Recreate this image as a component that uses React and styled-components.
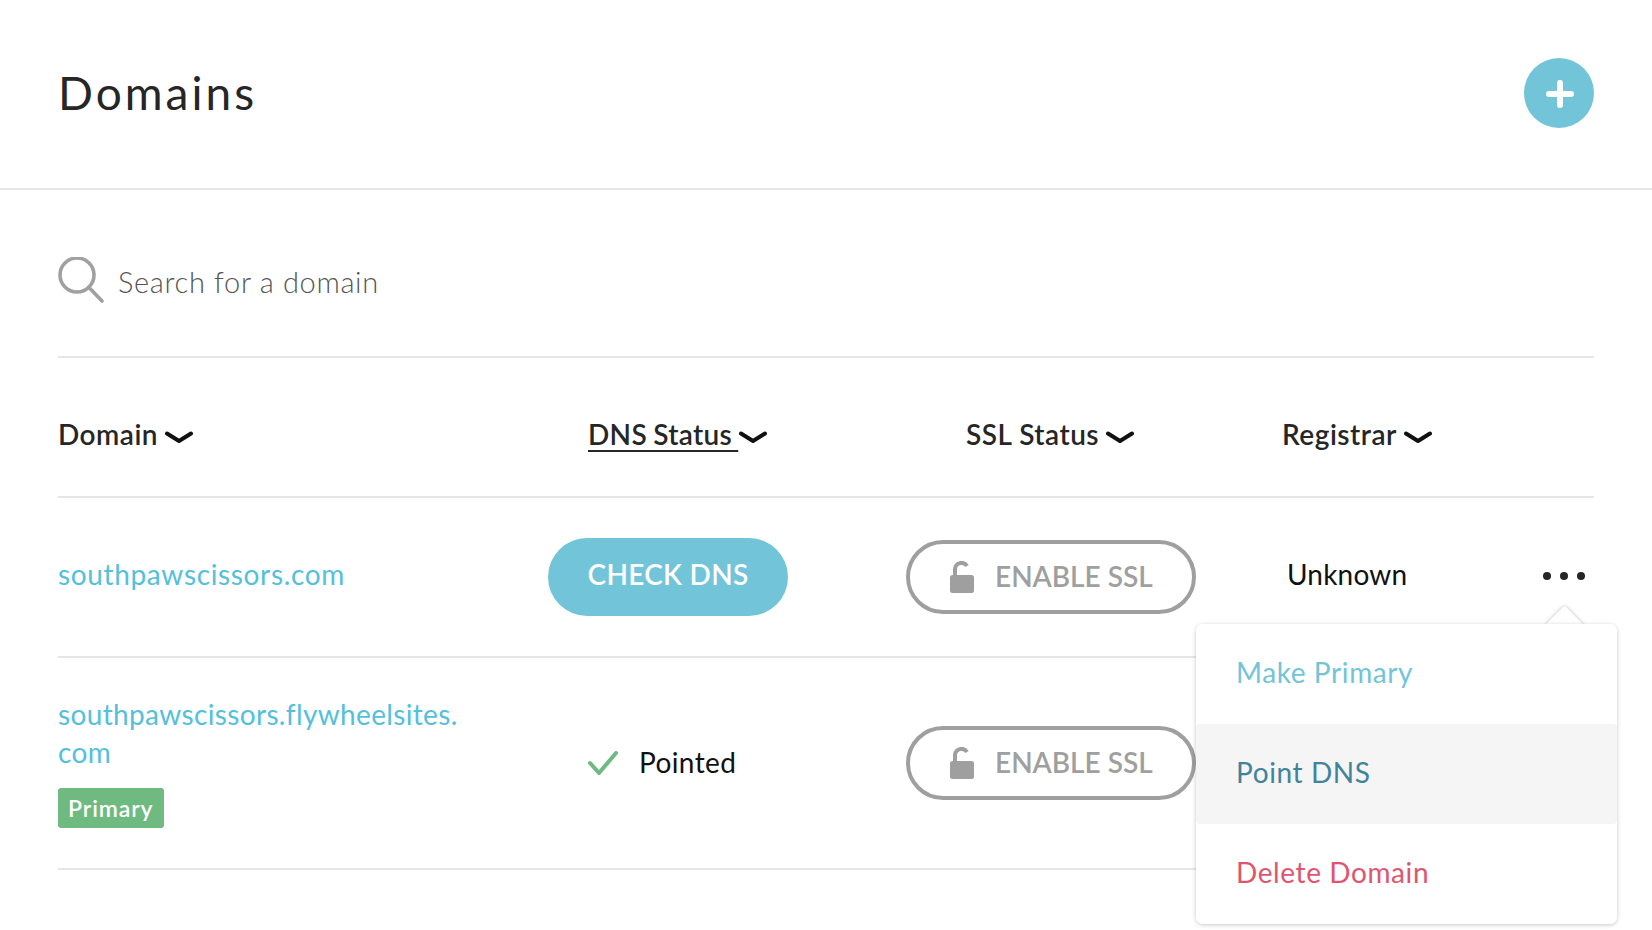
import styled, { createGlobalStyle } from 'styled-components';

const GlobalStyle = createGlobalStyle`
  html, body {
    margin: 0;
    padding: 0;
    background: #fff;
    font-family: Lato, "Open Sans", sans-serif;
    color: #111;
  }
  * { box-sizing: border-box; }
`
const Page = styled.div`
  width: 1652px;
  height: 930px;
  overflow: hidden;
`
const TitleBar = styled.header`
  height: 190px;
  padding: 58px 58px 0;
  display: flex;
  justify-content: space-between;
  align-items: flex-start;
  border-bottom: 2px solid #e6e6e6;
`
const Title = styled.h1`
  margin: 0;
  height: 70px;
  line-height: 70px;
  font-size: 46px;
  font-weight: 400;
  letter-spacing: 3px;
  color: #262626;
`
const AddButton = styled.button`
  width: 70px;
  height: 70px;
  padding: 2px 0 0 2px;
  border: 0;
  border-radius: 50%;
  background: #72c4d9;
  display: flex;
  align-items: center;
  justify-content: center;
`
const Content = styled.main`
  padding: 0 58px;
`
const SearchRow = styled.div`
  height: 168px;
  padding: 67px 0 53px;
  display: flex;
  align-items: center;
  gap: 14px;
  border-bottom: 2px solid #e6e6e6;
`
const SearchHint = styled.div`
  padding-top: 2px;
  font-size: 29px;
  font-weight: 300;
  letter-spacing: 0.66px;
  color: #555;
`
const Row = styled.div`
  display: grid;
  grid-template-columns: 490px 358px 290px 1fr;
  align-items: center;
  height: ${(p) => p.$height}px;
  padding-top: ${(p) => p.$top || 0}px;
  border-bottom: 2px solid #e6e6e6;
`
const HeadCell = styled.div`
  padding-left: ${(p) => p.$indent || 0}px;
  display: flex;
  align-items: center;
  font-size: 28px;
  font-weight: 600;
  letter-spacing: 0.5px;
  color: #262626;

  u {
    letter-spacing: 0.3px;
    word-spacing: -1px;
    text-underline-offset: 5px;
    text-decoration-thickness: 2px;
    white-space: pre;
  }
  svg { margin-left: ${(p) => p.$gap || 7}px; margin-top: 6px; }
`
const DomainCell = styled.div`
  padding-bottom: ${(p) => p.$lift}px;
`
const DomainLink = styled.a`
  display: block;
  font-size: 28px;
  line-height: 38px;
  letter-spacing: ${(p) => p.$tracking}px;
  color: #55bfdc;
  max-width: 420px;
`
const Badge = styled.span`
  display: inline-block;
  margin-top: 17px;
  width: 106px;
  height: 40px;
  line-height: 40px;
  padding-left: 10px;
  border-radius: 3px;
  background: #6fba81;
  color: #fff;
  font-size: 23px;
  font-weight: 600;
  letter-spacing: 0.9px;
`
const CheckButton = styled.button`
  width: 240px;
  height: 78px;
  padding: 0 0 7px;
  border: 0;
  border-radius: 39px;
  background: #72c4d9;
  color: #fff;
  font: 600 28px Lato, sans-serif;
  letter-spacing: 0.3px;
`
const SslButton = styled.button`
  width: 290px;
  height: 74px;
  padding: 0 0 0 40px;
  border: 4px solid #a09fa0;
  border-radius: 37px;
  background: #fff;
  color: #a09fa0;
  font: 600 28px Lato, sans-serif;
  display: flex;
  align-items: center;
  gap: 21px;

  span { padding-bottom: 2px; }
`
const Pointed = styled.div`
  padding: 0 0 2px 40px;
  display: flex;
  align-items: center;
  gap: 21px;
  font-size: 28px;
  letter-spacing: 0.4px;

  svg { margin-top: 2px; }
`
const RegistrarCell = styled.div`
  padding-left: 91px;
  display: flex;
  align-items: center;
  justify-content: space-between;
  font-size: 28px;
  letter-spacing: 0.2px;
  line-height: 38px;
`
const RegistrarName = styled.span`
  padding-bottom: 7px;
`
const Actions = styled.div`
  position: relative;
  top: -1px;
  margin-right: 9px;
  display: flex;
  gap: 9px;
`
const Dot = styled.span`
  width: 8px;
  height: 8px;
  border-radius: 50%;
  background: #262626;
`
const Menu = styled.div`
  position: absolute;
  top: 52px;
  right: -32px;
  width: 421px;
`
const MenuArrow = styled.div`
  position: absolute;
  top: -13px;
  right: 39px;
  width: 27px;
  height: 27px;
  background: #fff;
  border-radius: 3px;
  transform: rotate(45deg);
  box-shadow: 0 0 4px rgba(0, 0, 0, 0.28);
`
const MenuList = styled.div`
  position: relative;
  background: #fff;
  border-radius: 7px;
  box-shadow: 0 1px 4px rgba(0, 0, 0, 0.22);
  overflow: hidden;
`
const MenuItem = styled.div`
  height: 100px;
  padding: 0 0 4px 40px;
  display: flex;
  align-items: center;
  font-size: 28px;
  letter-spacing: 0.6px;
  border-radius: 4px;
  color: ${(p) => p.$color};
  background: ${(p) => (p.$active ? '#f5f5f5' : '#fff')};
`

const Chevron = () => (
  <svg width="28" height="13" viewBox="0 0 28 13">
    <path d="M2 2.5 L14 10 L26 2.5" fill="none" stroke="#111" strokeWidth="4" strokeLinecap="round" strokeLinejoin="round" />
  </svg>
)

const SearchIcon = () => (
  <svg width="46" height="46" viewBox="0 0 46 46">
    <circle cx="19" cy="18" r="17" fill="none" stroke="#a0a0a0" strokeWidth="3.6" />
    <path d="M31 30.5 L44 44" fill="none" stroke="#a0a0a0" strokeWidth="3.6" strokeLinecap="round" />
  </svg>
)

const PlusIcon = () => (
  <svg width="28" height="28" viewBox="0 0 28 28">
    <path d="M14 3 V25 M3 14 H25" fill="none" stroke="#fff" strokeWidth="6" strokeLinecap="round" />
  </svg>
)

const LockIcon = () => (
  <svg width="24" height="32" viewBox="0 0 24 32">
    <rect x="0" y="14" width="24" height="18" rx="2.5" fill="#a09fa0" />
    <path d="M5 15 V8 a6.5 6.5 0 0 1 12 -3" fill="none" stroke="#a09fa0" strokeWidth="4" />
  </svg>
)

const CheckIcon = () => (
  <svg width="30" height="24" viewBox="0 0 30 24">
    <path d="M2 12 L11 22 L28 2" fill="none" stroke="#6fba81" strokeWidth="4" strokeLinecap="round" strokeLinejoin="round" />
  </svg>
)

const EnableSsl = () => (
  <SslButton>
    <LockIcon />
    <span>ENABLE SSL</span>
  </SslButton>
)

const App = () => {
  return (
    <Page>
      <GlobalStyle />
      <TitleBar>
        <Title>Domains</Title>
        <AddButton aria-label="Add domain"><PlusIcon /></AddButton>
      </TitleBar>
      <Content>
        <SearchRow>
          <SearchIcon />
          <SearchHint>Search for a domain</SearchHint>
        </SearchRow>
        <Row $height={140} $top={14}>
          <HeadCell>Domain<Chevron /></HeadCell>
          <HeadCell $indent={40} $gap={1}><u>DNS Status </u><Chevron /></HeadCell>
          <HeadCell $indent={60}>SSL Status<Chevron /></HeadCell>
          <HeadCell $indent={86}>Registrar<Chevron /></HeadCell>
        </Row>
        <Row $height={160}>
          <DomainCell $lift={7}>
            <DomainLink $tracking={0.65}>southpawscissors.com</DomainLink>
          </DomainCell>
          <CheckButton>CHECK DNS</CheckButton>
          <EnableSsl />
          <RegistrarCell>
            <RegistrarName>Unknown</RegistrarName>
            <Actions>
              <Dot /><Dot /><Dot />
              <Menu>
                <MenuArrow />
                <MenuList>
                  <MenuItem $color="#72c4d9">Make Primary</MenuItem>
                  <MenuItem $color="#41839a" $active>Point DNS</MenuItem>
                  <MenuItem $color="#e0556e">Delete Domain</MenuItem>
                </MenuList>
              </Menu>
            </Actions>
          </RegistrarCell>
        </Row>
        <Row $height={212}>
          <DomainCell $lift={3}>
            <DomainLink $tracking={0.35}>southpawscissors.flywheelsites.<wbr />com</DomainLink>
            <Badge>Primary</Badge>
          </DomainCell>
          <Pointed><CheckIcon />Pointed</Pointed>
          <EnableSsl />
          <div />
        </Row>
      </Content>
    </Page>
  )
}

export default App;
